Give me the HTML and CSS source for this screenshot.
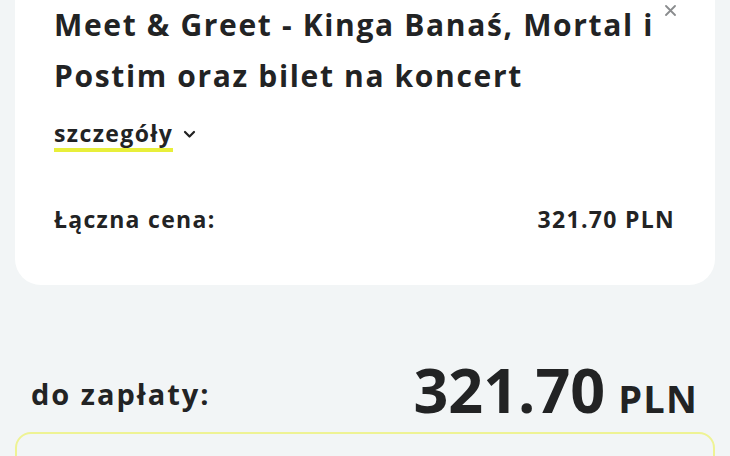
FILE: index.html
```html
<!DOCTYPE html>
<html lang="pl">
<head>
<meta charset="utf-8">
<title>Podsumowanie</title>
<link rel="stylesheet" href="styles.css">
</head>
<body>
<section class="card">
  <button class="close" aria-label="Zamknij">
    <svg width="11" height="11" viewBox="0 0 11 11"><path d="M1 1L10 10M10 1L1 10" stroke="#8a8c8e" stroke-width="1.8" stroke-linecap="round"/></svg>
  </button>
  <h1 class="title">Meet &amp; Greet - Kinga Banaś, Mortal i Postim oraz bilet na koncert</h1>
  <div class="details">
    <span class="details-link">szczegóły</span>
    <svg class="chevron" width="13" height="9" viewBox="0 0 13 9"><path d="M2 2L6.5 6.5L11 2" fill="none" stroke="#222" stroke-width="2.2" stroke-linecap="round" stroke-linejoin="round"/></svg>
  </div>
  <div class="total-row">
    <span>Łączna cena:</span>
    <span>321.70 PLN</span>
  </div>
</section>
<section class="pay">
  <span class="pay-label">do zapłaty:</span>
  <span class="pay-amount"><span class="pay-number">321.70</span><span class="pay-currency">PLN</span></span>
</section>
<section class="box"></section>
</body>
</html>
```
FILE: styles.css
```css
html, body {
  margin: 0;
  padding: 0;
}
body {
  background: #f2f5f6;
  font-family: "Open Sans", "Lato", sans-serif;
  color: #222324;
  width: 730px;
  height: 456px;
  overflow: hidden;
}
.card {
  position: relative;
  margin: 0 15px;
  background: #ffffff;
  border-radius: 0 0 26px 26px;
  padding: 0 40px 0 39px;
  height: 286px;
  box-sizing: border-box;
}
.close {
  position: absolute;
  top: 6px;
  right: 39px;
  border: 0;
  background: none;
  padding: 0;
  width: 11px;
  height: 11px;
  display: flex;
}
.title {
  margin: -1px 0 0;
  font-size: 30px;
  line-height: 51px;
  font-weight: 700;
  letter-spacing: 1.65px;
  padding-right: 18px;
}
.details {
  display: flex;
  align-items: center;
  gap: 10px;
  margin-top: 18px;
}
.details-link {
  font-size: 23px;
  font-weight: 700;
  line-height: 28px;
  letter-spacing: 1.4px;
  border-bottom: 4px solid #e8ef3a;
  padding-bottom: 1px;
}
.chevron {
  margin-top: -3px;
}
.total-row {
  display: flex;
  justify-content: space-between;
  margin-top: 53px;
  font-size: 23px;
  font-weight: 700;
  line-height: 28px;
  letter-spacing: 1.3px;
}
.pay {
  display: flex;
  justify-content: space-between;
  align-items: flex-end;
  padding: 0 32px 0 31px;
  margin-top: 74px;
  height: 62px;
}
.pay-label {
  font-size: 29px;
  font-weight: 700;
  line-height: 36px;
  letter-spacing: 2px;
  margin-bottom: 9px;
}
.pay-amount {
  display: flex;
  align-items: baseline;
  gap: 13px;
}
.pay-number {
  font-size: 61px;
  font-weight: 700;
  line-height: 62px;
}
.pay-currency {
  font-size: 38px;
  font-weight: 700;
  line-height: 40px;
  letter-spacing: 1.2px;
}
.box {
  margin: 11px 15px 0;
  height: 60px;
  border: 2px solid #eef394;
  border-radius: 16px;
}
```
